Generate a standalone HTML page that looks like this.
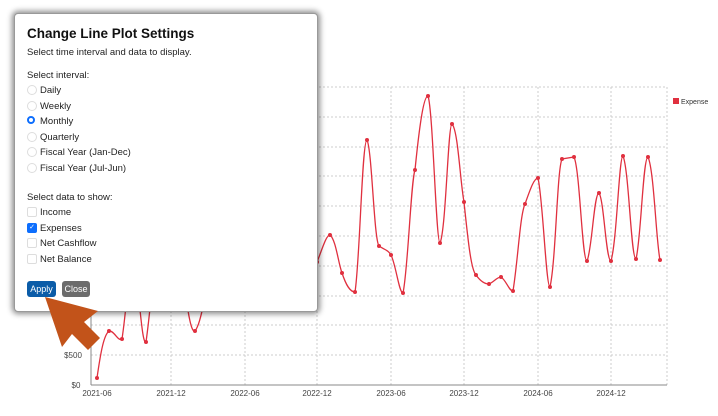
<!DOCTYPE html>
<html><head><style>
body{margin:0;width:718px;height:416px;background:#fff;position:relative;overflow:hidden;font-family:"Liberation Sans",sans-serif;}
.dlg{position:absolute;left:14px;top:13px;width:302px;height:297px;background:#fff;border:1px solid #999;border-radius:4px;box-shadow:0 0 6px 2px rgba(0,0,0,.45);font-size:9.5px;color:#222}
.t{position:absolute;left:12px;font-weight:bold;font-size:13.5px;color:#111}
.l{position:absolute;left:12px}
.o{position:absolute;left:12px}
.o i{position:absolute;left:0;top:0;width:8px;height:8px;border:1px solid #ddd;border-radius:50%}
.o span{position:absolute;left:13px;top:0;white-space:nowrap}
.c i{border-radius:2px}
.btn{position:absolute;top:267px;height:16px;line-height:16px;color:#fff;font-size:9px;text-align:center;border-radius:3px}
</style></head><body>
<svg width="718" height="416" style="position:absolute;left:0;top:0">
<g stroke="#ccc" stroke-dasharray="2,2" stroke-width="1">
<line x1="91" x2="667" y1="87" y2="87"/><line x1="91" x2="667" y1="117" y2="117"/><line x1="91" x2="667" y1="147" y2="147"/><line x1="91" x2="667" y1="176" y2="176"/><line x1="91" x2="667" y1="206" y2="206"/><line x1="91" x2="667" y1="236" y2="236"/><line x1="91" x2="667" y1="266" y2="266"/><line x1="91" x2="667" y1="296" y2="296"/><line x1="91" x2="667" y1="325" y2="325"/><line x1="91" x2="667" y1="355" y2="355"/>
<line x1="171" x2="171" y1="87" y2="385"/><line x1="245" x2="245" y1="87" y2="385"/><line x1="317" x2="317" y1="87" y2="385"/><line x1="391" x2="391" y1="87" y2="385"/><line x1="464" x2="464" y1="87" y2="385"/><line x1="538" x2="538" y1="87" y2="385"/><line x1="611" x2="611" y1="87" y2="385"/><line x1="667" x2="667" y1="87" y2="385"/>
</g>
<line x1="91" x2="667" y1="385" y2="385" stroke="#888"/>
<line x1="91" x2="91" y1="87" y2="385" stroke="#888"/>
<g font-size="8" fill="#444" text-anchor="middle">
<text x="97" y="396">2021-06</text><text x="171" y="396">2021-12</text><text x="245" y="396">2022-06</text><text x="317" y="396">2022-12</text><text x="391" y="396">2023-06</text><text x="464" y="396">2023-12</text><text x="538" y="396">2024-06</text><text x="611" y="396">2024-12</text>
<text x="76" y="388">$0</text><text x="73" y="358">$500</text>
</g>
<path fill="none" stroke="#e0303f" stroke-width="1.3" d="M97,378 C101,350 104,335 109,331 C114,330 118,342 122,339 C128,300 130,240 134,260 C140,300 142,345 146,342 C152,300 154,250 158,260 L171,250 L183,270 C188,320 192,333 195,331 C200,325 203,305 207,290 L245,290 L305,300 C312,290 314,270 317,262 C322,250 326,235 330,235 C336,240 338,262 342,273 C346,285 350,292 355,292 C360,260 362,140 367,140 C372,150 374,240 379,246 C385,250 388,250 391,255 C396,265 399,293 403,293 C408,270 411,180 415,170 C420,120 424,96 428,96 C433,110 436,243 440,243 C446,230 448,124 452,124 C458,130 460,180 464,202 C468,240 471,270 476,275 C481,282 485,284 489,284 C494,282 497,277 501,277 C506,280 509,291 513,291 C518,260 520,215 525,204 C530,190 534,178 538,178 C543,200 546,287 550,287 C556,260 557,170 562,159 L574,157 C580,170 582,261 587,261 C592,250 594,193 599,193 C604,200 606,261 611,261 C617,240 619,156 623,156 C629,170 631,259 636,259 C641,240 643,157 648,157 C654,170 656,240 660,260"/>
<g fill="#e0303f">
<circle cx="97" cy="378" r="2"/><circle cx="109" cy="331" r="2"/><circle cx="122" cy="339" r="2"/><circle cx="146" cy="342" r="2"/><circle cx="195" cy="331" r="2"/>
<circle cx="317" cy="262" r="2"/><circle cx="330" cy="235" r="2"/><circle cx="342" cy="273" r="2"/><circle cx="355" cy="292" r="2"/><circle cx="367" cy="140" r="2"/><circle cx="379" cy="246" r="2"/><circle cx="391" cy="255" r="2"/><circle cx="403" cy="293" r="2"/><circle cx="415" cy="170" r="2"/><circle cx="428" cy="96" r="2"/><circle cx="440" cy="243" r="2"/><circle cx="452" cy="124" r="2"/><circle cx="464" cy="202" r="2"/><circle cx="476" cy="275" r="2"/><circle cx="489" cy="284" r="2"/><circle cx="501" cy="277" r="2"/><circle cx="513" cy="291" r="2"/><circle cx="525" cy="204" r="2"/><circle cx="538" cy="178" r="2"/><circle cx="550" cy="287" r="2"/><circle cx="562" cy="159" r="2"/><circle cx="574" cy="157" r="2"/><circle cx="587" cy="261" r="2"/><circle cx="599" cy="193" r="2"/><circle cx="611" cy="261" r="2"/><circle cx="623" cy="156" r="2"/><circle cx="636" cy="259" r="2"/><circle cx="648" cy="157" r="2"/><circle cx="660" cy="260" r="2"/>
</g>
<rect x="673" y="98" width="6" height="6" fill="#e0303f"/>
<text x="681" y="104" font-size="7" fill="#333">Expense</text>
</svg>
<div class="dlg">
<div class="t" style="top:12px">Change Line Plot Settings</div>
<div class="l" style="top:33px">Select time interval and data to display.</div>
<div class="l" style="top:56px">Select interval:</div>
<div class="o" style="top:71px"><i></i><span>Daily</span></div>
<div class="o" style="top:87px"><i></i><span>Weekly</span></div>
<div class="o" style="top:102px"><i style="border:2.5px solid #0d6efd;width:4px;height:4px"></i><span>Monthly</span></div>
<div class="o" style="top:118px"><i></i><span>Quarterly</span></div>
<div class="o" style="top:133px"><i></i><span>Fiscal Year (Jan-Dec)</span></div>
<div class="o" style="top:149px"><i></i><span>Fiscal Year (Jul-Jun)</span></div>
<div class="l" style="top:178px">Select data to show:</div>
<div class="o c" style="top:193px"><i></i><span>Income</span></div>
<div class="o c" style="top:209px"><i style="background:#0d6efd;border-color:#0d6efd;color:#fff;font-size:7px;line-height:8px;text-align:center;font-style:normal">✓</i><span>Expenses</span></div>
<div class="o c" style="top:224px"><i></i><span>Net Cashflow</span></div>
<div class="o c" style="top:240px"><i></i><span>Net Balance</span></div>
<div class="btn" style="left:12px;width:29px;background:#0b5ca8">Apply</div>
<div class="btn" style="left:47px;width:28px;background:#6c6c6c">Close</div>
</div>
<svg width="718" height="416" style="position:absolute;left:0;top:0">
<polygon fill="#c2531a" points="45,297 98,311 84,322 100,338 88,350 72,334 62,347"/>
</svg>
</body></html>
